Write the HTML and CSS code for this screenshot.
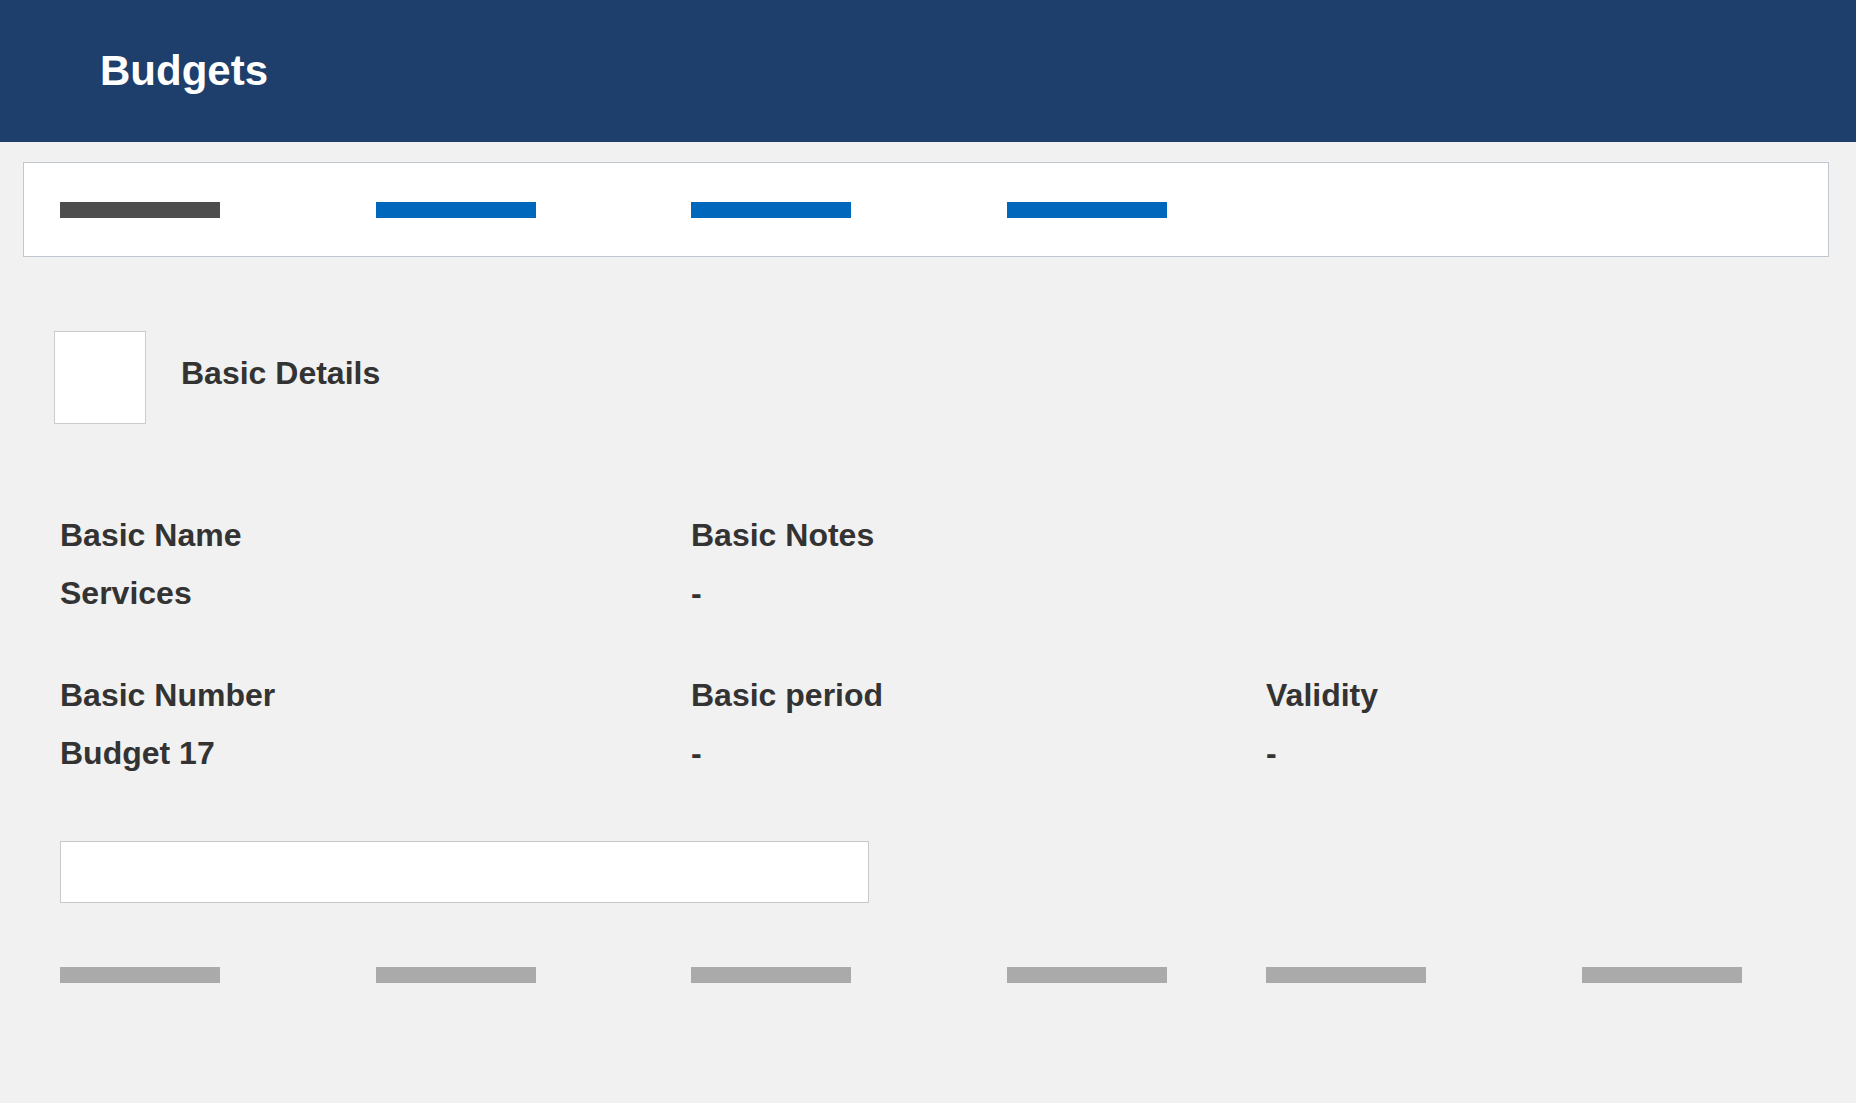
FILE: index.html
```html
<!DOCTYPE html>
<html lang="en">
<head>
  <meta charset="UTF-8">
  <meta name="viewport" content="width=device-width, initial-scale=1.0">
  <title>Budgets</title>
  <link rel="stylesheet" href="styles.css">
</head>
<body>
  <header class="topbar">
    <h1>Budgets</h1>
  </header>

  <nav class="tabs">
    <span class="tab current"></span>
    <span class="tab"></span>
    <span class="tab"></span>
    <span class="tab"></span>
  </nav>

  <section class="section-head">
    <div class="thumb"></div>
    <h2>Basic Details</h2>
  </section>

  <section class="details">
    <div class="fields">
      <div class="field">
        <div class="label">Basic Name</div>
        <div class="value">Services</div>
      </div>
      <div class="field">
        <div class="label">Basic Notes</div>
        <div class="value">-</div>
      </div>
      <div class="field"></div>

      <div class="field">
        <div class="label">Basic Number</div>
        <div class="value">Budget 17</div>
      </div>
      <div class="field">
        <div class="label">Basic period</div>
        <div class="value">-</div>
      </div>
      <div class="field">
        <div class="label">Validity</div>
        <div class="value">-</div>
      </div>
    </div>

    <input type="text" class="note-input">

    <div class="placeholders">
      <div class="pair"><span class="ph"></span><span class="ph"></span></div>
      <div class="pair"><span class="ph"></span><span class="ph"></span></div>
      <div class="pair"><span class="ph"></span><span class="ph"></span></div>
    </div>
  </section>
</body>
</html>
```

FILE: styles.css
```css
* {
  box-sizing: border-box;
}

html {
  background: #f1f1f1;
}

body {
  margin: 0;
  font-family: 'Liberation Sans', Arial, sans-serif;
  color: #333;
  background: #f1f1f1;
}

.topbar {
  height: 142px;
  background: #1e3f6b;
  display: flex;
  align-items: center;
  padding-left: 100px;
}

.topbar h1 {
  margin: 0;
  color: #fff;
  font-size: 42px;
  font-weight: bold;
}

.tabs {
  margin: 20px 27px 0 23px;
  background: #fff;
  border: 1px solid #c0c7ce;
  padding: 39px 36px 38px;
  display: flex;
  gap: 155.5px;
}

.tab {
  width: 160px;
  height: 16px;
  background: #0068bc;
}

.tab.current {
  background: #4d4d4d;
}

.section-head {
  margin: 74px 0 0 54px;
  display: flex;
  align-items: center;
  gap: 35px;
}

.thumb {
  width: 92px;
  height: 93px;
  background: #fff;
  border: 1px solid #ccc;
}

.section-head h2 {
  margin: 0 0 10px;
  font-size: 32px;
  line-height: 40px;
  font-weight: bold;
}

.details {
  margin-left: 60px;
  padding-bottom: 120px;
}

.fields {
  margin-top: 91px;
  display: grid;
  grid-template-columns: 631px 575px 1fr;
  row-gap: 62px;
}

.label,
.value {
  font-size: 32px;
  line-height: 40px;
  font-weight: bold;
}

.label {
  margin-bottom: 18px;
}

.note-input {
  display: block;
  margin-top: 68px;
  width: 809px;
  height: 62px;
  background: #fff;
  border: 1px solid #c8c8c8;
  padding: 0 12px;
  font: inherit;
  font-size: 20px;
  outline: none;
}

.placeholders {
  margin-top: 64px;
  display: grid;
  grid-template-columns: 631px 575px 1fr;
}

.pair {
  display: flex;
  gap: 156px;
}

.ph {
  width: 160px;
  height: 16px;
  background: #aaa;
}
```
